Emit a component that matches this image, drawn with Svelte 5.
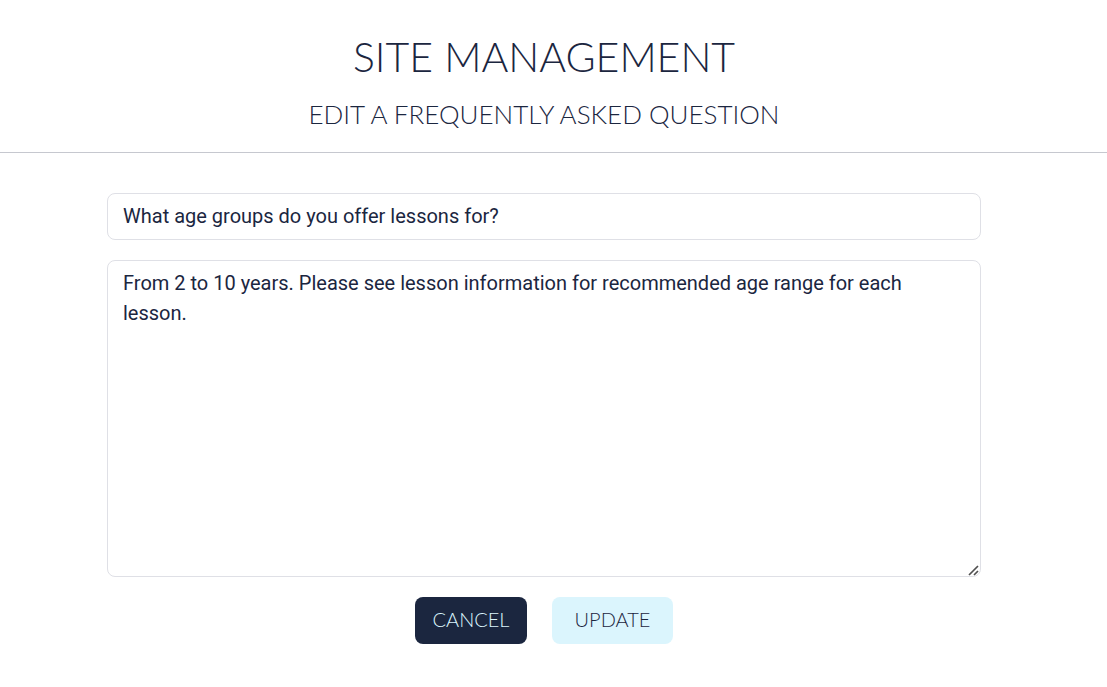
<script>
  let question = $state('What age groups do you offer lessons for?');
  let answer = $state('From 2 to 10 years. Please see lesson information for recommended age range for each lesson.');
</script>

<div class="page">
  <header>
    <h1>SITE MANAGEMENT</h1>
    <h2>EDIT A FREQUENTLY ASKED QUESTION</h2>
  </header>
  <main>
    <form>
      <input type="text" aria-label="Question" bind:value={question} />
      <div class="answer">
        <textarea aria-label="Answer" spellcheck="false" bind:value={answer}></textarea>
        <svg class="grip" width="11" height="11" viewBox="0 0 11 11" aria-hidden="true">
          <path d="M1 10 10 1M6 10 10 6" fill="none" stroke="#505050" stroke-width="1.7" />
        </svg>
      </div>
      <div class="actions">
        <button type="button" class="cancel">CANCEL</button>
        <button type="submit" class="update">UPDATE</button>
      </div>
    </form>
  </main>
</div>

<style>
  :global(body) {
    background: #fff;
    color: #1b263f;
  }
  .page {
    padding-bottom: 40px;
  }
  header {
    padding: 32px 19px 20px 0;
    border-bottom: 1px solid #c6c8cf;
    text-align: center;
    font-family: Lato, sans-serif;
  }
  h1,
  h2 {
    margin: 0;
    font-weight: 300;
  }
  h1 {
    font-size: 41px;
    line-height: 50px;
  }
  h2 {
    margin-top: 16px;
    font-size: 26px;
    line-height: 32px;
    padding-bottom: 2px;
  }
  main {
    padding: 40px 19px 0 0;
  }
  form {
    display: flex;
    flex-direction: column;
    gap: 20px;
    max-width: 874px;
    margin: 0 auto;
  }
  input,
  textarea {
    box-sizing: border-box;
    width: 100%;
    margin: 0;
    padding: 7px 15px;
    border: 1px solid #dfe0e6;
    border-radius: 8px;
    background: #fff;
    color: #1b263f;
    font: 400 20px/30px Roboto, sans-serif;
    outline: none;
  }
  input {
    height: 47px;
    padding-bottom: 8px;
  }
  .answer {
    position: relative;
  }
  textarea {
    display: block;
    height: 317px;
    resize: vertical;
  }
  textarea::-webkit-resizer {
    background: transparent;
  }
  .grip {
    position: absolute;
    right: 2px;
    bottom: 1px;
    pointer-events: none;
  }
  .actions {
    display: flex;
    justify-content: center;
    gap: 25px;
  }
  button {
    height: 47px;
    padding: 0 16px 3px;
    border: 0;
    border-radius: 8px;
    font: 300 20px/30px Lato, sans-serif;
  }
  .cancel {
    min-width: 112px;
    background: #1b263f;
    color: #dbf5fd;
  }
  .update {
    min-width: 121px;
    background: #dbf5fd;
    color: #1b263f;
  }
</style>
